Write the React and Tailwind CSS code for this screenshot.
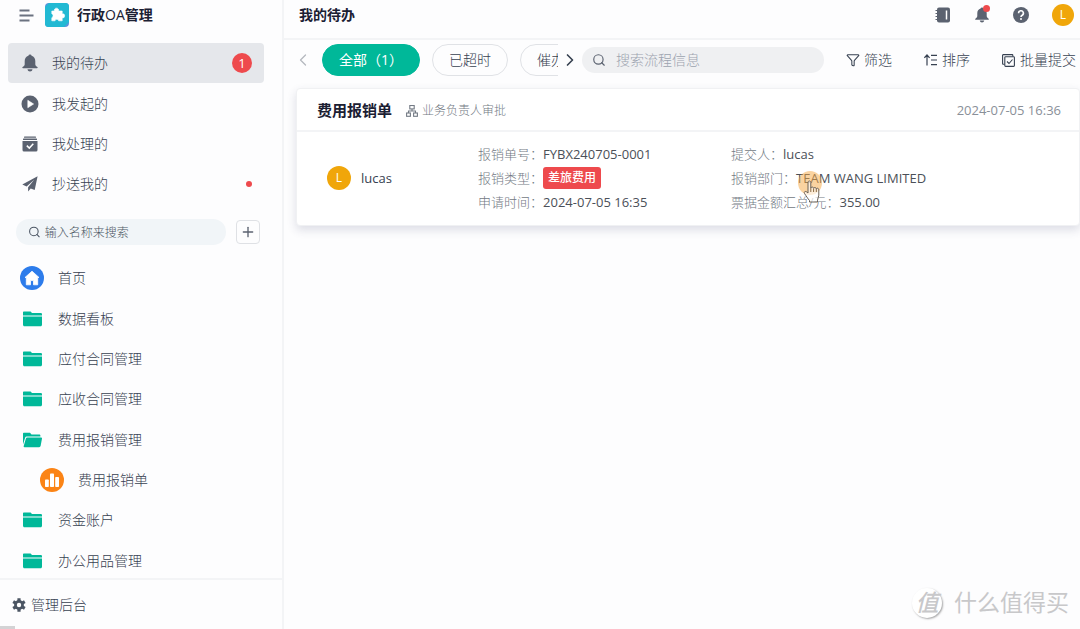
import { useState } from 'react';
import { ChevronLeft, ChevronRight, Search, Plus, Filter } from 'lucide-react';

const BellIcon = ({ className }) => (
    <svg viewBox="0 0 16 18" fill="currentColor" className={className}>
        <path d="M8 0.5a1.6 1.6 0 0 1 1.6 1.2C12 2.4 13.3 4.400 13.300 7v3.200c0 1.300 0.900 2 2.100 2.900 0.500 0.400 0.300 1.200-0.400 1.200H1c-0.700 0-0.900-0.800-0.400-1.200C1.800 12.200 2.700 11.500 2.700 10.200V7c0-2.600 1.300-4.600 3.700-5.300A1.600 1.600 0 0 1 8 0.500z" />
        <path d="M5.500 15.300h5c-0.200 1.400-1.200 2.200-2.500 2.200s-2.300-0.800-2.500-2.200z" />
    </svg>
);

const PlayIcon = () => (
    <svg viewBox="0 0 18 18" className="size-[18px]">
        <circle cx="9" cy="9" r="8.500" fill="currentColor" />
        <path d="M6.800 5.300v7.400L12.600 9z" fill="#fff" stroke="#fff" strokeWidth="0.600" strokeLinejoin="round" />
    </svg>
);

const DoneIcon = () => (
    <svg viewBox="0 0 16 16" className="size-4">
        <rect x="2" y="0.500" width="12" height="1.300" rx="0.500" fill="currentColor" />
        <rect x="1" y="2.600" width="14" height="1.300" rx="0.500" fill="currentColor" />
        <path d="M0.500 5h15v9a1.500 1.500 0 0 1-1.500 1.500H2A1.500 1.500 0 0 1 0.500 14z" fill="currentColor" />
        <path d="M4.800 9.600l2.500 2.500 4-4.300" fill="none" stroke="#fff" strokeWidth="1.500" />
    </svg>
);

const PlaneIcon = () => (
    <svg viewBox="0 0 16 16" fill="currentColor" className="size-4">
        <path d="M15.600 0.300L0.300 8.600l4.300 1.900 7.600-6.800-6.100 7.600v4.300l2.600-3.200 4 1.700z" />
    </svg>
);

const FolderIcon = () => (
    <svg viewBox="0 0 19 16" fill="#00b899" className="h-4 w-[19px]">
        <path d="M1 0.500h6.600L9 2h8.700c0.700 0 1.300 0.500 1.300 1.200V4.500H0v-3c0-0.600 0.400-1 1-1z" />
        <path d="M0 5.500h19v8.300c0 0.900-0.600 1.500-1.400 1.500H1.400C0.600 15.300 0 14.700 0 13.800z" />
    </svg>
);

const FolderOpenIcon = () => (
    <svg viewBox="0 0 19 16" fill="#00b899" className="h-4 w-[19px]">
        <path d="M1 0.800h6l1.500 1.600h7.700c0.700 0 1.200 0.500 1.200 1.200V4.400H3.600c-0.700 0-1.200 0.400-1.400 1L0 12.500V1.800c0-0.600 0.400-1 1-1z" />
        <path d="M4.200 5.500H18.200c0.600 0 0.900 0.500 0.800 1l-1.400 7.600c-0.200 0.700-0.700 1.100-1.400 1.100H1.500c-0.700 0-1-0.500-0.800-1.100l2.200-7.700c0.200-0.600 0.700-0.900 1.300-0.900z" />
    </svg>
);

const HomeIcon = () => (
    <svg viewBox="0 0 24 24" className="size-6">
        <circle cx="12" cy="12" r="12" fill="#2d7ceb" />
        <path d="M12 5.200l7 6.300h-1.300v7.300h-4.200v-4.200h-3v4.200H6.300v-7.300H5z" fill="#fff" stroke="#fff" strokeWidth="0.800" strokeLinejoin="round" />
    </svg>
);

const ChartIcon = () => (
    <svg viewBox="0 0 24 24" className="size-6">
        <circle cx="12" cy="12" r="12" fill="#fb8416" />
        <rect x="5" y="11.500" width="3.800" height="7.500" rx="0.800" fill="#fff" />
        <rect x="10" y="5.500" width="4" height="13.500" rx="0.800" fill="#fff" />
        <rect x="15.200" y="9" width="3.800" height="10" rx="0.800" fill="#fff" />
    </svg>
);

const GearIcon = () => (
    <svg viewBox="0 0 14 14" className="size-3.5">
        <g stroke="currentColor" strokeWidth="3.200">
            <path d="M7 0.300v13.400M1.200 3.650l11.600 6.700M1.200 10.350l11.600-6.700" />
        </g>
        <circle cx="7" cy="7" r="4.900" fill="currentColor" />
        <circle cx="7" cy="7" r="2.200" fill="#fff" />
    </svg>
);

const LogoIcon = () => (
    <svg viewBox="0 0 24 24" className="size-6">
        <rect width="24" height="24" rx="4" fill="#5a91dc" />
        <path d="M4 0h16.500A3.500 3.500 0 0 1 24 3.500V19l-5 5H3.500A3.500 3.500 0 0 1 0 20.500V4z" fill="#22b9d3" />
        <path d="M6.800 8h2.600a2.200 2.200 0 1 1 4.200 0h3.600v2.900a2 2 0 1 1 0 3.900v3h-3.500a1.900 1.900 0 0 0-3.700 0H6.800v-3.100a2.100 2.100 0 0 0 0-3.900z" fill="#fff" stroke="#fff" strokeWidth="0.600" strokeLinejoin="round" />
    </svg>
);

const MenuIcon = () => (
    <svg viewBox="0 0 15 13" className="h-[13px] w-[15px]" stroke="#6b7280" strokeWidth="1.900">
        <path d="M0.500 1.500h10M0.500 6.500h14M0.500 11.500h10" />
    </svg>
);

const NotebookIcon = () => (
    <svg viewBox="0 0 16 16" className="size-4">
        <rect x="2" y="0.500" width="13" height="15" rx="2" fill="currentColor" />
        <path d="M0.500 3.500h3M0.500 6.500h3M0.500 9.500h3M0.500 12.500h3" stroke="currentColor" strokeWidth="1.200" />
        <path d="M11.500 3.500v9" stroke="#fff" strokeWidth="1.500" />
    </svg>
);

const HelpIcon = () => (
    <svg viewBox="0 0 16 16" className="size-4">
        <circle cx="8" cy="8" r="8" fill="currentColor" />
        <path d="M5.600 6.200a2.400 2.400 0 1 1 3.600 2c-0.800 0.500-1.200 0.800-1.200 1.700" fill="none" stroke="#fff" strokeWidth="1.600" />
        <circle cx="8" cy="12" r="1" fill="#fff" />
    </svg>
);

const SortIcon = () => (
    <svg viewBox="0 0 13 12" className="h-3 w-[13px]" fill="none" stroke="currentColor" strokeWidth="1.200">
        <path d="M3 11.500V1M0.400 3.800L3 1l2.600 2.800M7 1.300h6M7 6h6M7 10.700h6" />
    </svg>
);

const BatchIcon = () => (
    <svg viewBox="0 0 13 13" className="size-[13px]" fill="none" stroke="currentColor" strokeWidth="1.100">
        <path d="M2.600 10.200H1.200a0.600 0.600 0 0 1-0.600-0.600V1.200a0.600 0.600 0 0 1 0.600-0.600h9a0.600 0.600 0 0 1 0.600 0.600v1.200" />
        <rect x="2.800" y="2.800" width="9.600" height="9.600" rx="0.800" />
        <path d="M5 7.500l2 2L10.500 5.500" />
    </svg>
);

const FlowIcon = () => (
    <svg viewBox="0 0 12 12" className="size-3" fill="none" stroke="currentColor" strokeWidth="1.100">
        <rect x="3.800" y="0.500" width="4.400" height="3.400" />
        <rect x="0.600" y="8" width="3.800" height="3.300" />
        <rect x="7.600" y="8" width="3.800" height="3.300" />
        <path d="M6 4v2M2.500 8V6h7v2" />
    </svg>
);

const HandCursor = () => (
    <svg viewBox="0 0 28 36" className="h-9 w-7">
        <circle cx="14" cy="14" r="12" fill="#f5a742" fillOpacity="0.500" />
        <path
            d="M12 24V13.500c0-2 2.800-2 2.800 0V19c0.400-1.400 2.700-1.300 2.800 0.300 0.500-1.200 2.600-1 2.700 0.500 0.600-1 2.500-0.700 2.500 1v5.400c0 2-1.300 3.200-1.300 5V33h-8v-1.500c-1.700-1.800-3.400-4.800-5-7-1-1.600 1-2.800 2.300-1.500z"
            fill="#fff"
            fillOpacity="0.600"
            stroke="#6b6258"
            strokeWidth="1"
            strokeLinejoin="round"
        />
        <path d="M14.800 19v4M17.600 19.500V23M20.300 20v3" stroke="#8a6a42" strokeWidth="1" />
    </svg>
);

const tasks = [
    { name: '我的待办', icon: <BellIcon className="h-[18px] w-4" />, count: 1 },
    { name: '我发起的', icon: <PlayIcon /> },
    { name: '我处理的', icon: <DoneIcon /> },
    { name: '抄送我的', icon: <PlaneIcon />, dot: true },
];

const menus = [
    { name: '首页', icon: <HomeIcon /> },
    { name: '数据看板', icon: <FolderIcon /> },
    { name: '应付合同管理', icon: <FolderIcon /> },
    { name: '应收合同管理', icon: <FolderIcon /> },
    { name: '费用报销管理', icon: <FolderOpenIcon /> },
    { name: '费用报销单', icon: <ChartIcon />, child: true },
    { name: '资金账户', icon: <FolderIcon /> },
    { name: '办公用品管理', icon: <FolderIcon /> },
];

const tabs = ['全部（1）', '已超时', '催办'];

const Field = ({ label, children }) => (
    <div className="flex h-6 items-center whitespace-nowrap">
        <dt className="text-[#737a84]">{label}：</dt>
        <dd className="font-normal text-[#4b5058]">{children}</dd>
    </div>
);

const Sidebar = ({ active, onSelect }) => (
    <aside className="flex w-[284px] shrink-0 flex-col border-r-2 border-[#f3f4f6]">
        <div className="flex h-[30px] items-center pl-[19px]">
            <button aria-label="收起菜单"><MenuIcon /></button>
            <span className="ml-[11px]"><LogoIcon /></span>
            <h1 className="ml-2 text-sm font-bold text-[#1b2033]">
                行政<span className="font-normal">OA</span>管理
            </h1>
        </div>

        <nav className="mt-[13px] pr-[18px] pl-2">
            {tasks.map((item) => (
                <a
                    key={item.name}
                    href="#"
                    onClick={() => onSelect(item.name)}
                    className={`flex h-10 items-center rounded pr-3 pl-3 first:mb-px ${active === item.name ? 'bg-[#e5e7eb]' : ''}`}
                >
                    <span className="flex w-5 justify-center text-[#5b6270]">{item.icon}</span>
                    <span className="ml-3 flex-1">{item.name}</span>
                    {item.count && (
                        <span className="flex size-5 items-center justify-center rounded-full bg-[#ee4a4d] text-[13px] font-normal text-white">
                            {item.count}
                        </span>
                    )}
                    {item.dot && <span className="size-1.5 rounded-full bg-[#ee4a4d]" />}
                </a>
            ))}
        </nav>

        <div className="mt-[15px] flex items-center gap-2.5 pr-[22px] pl-4">
            <label className="flex h-[26px] flex-1 items-center gap-1 rounded-full bg-[#f1f5f8] pl-3">
                <Search className="size-3.5 text-[#4b5563]" strokeWidth={2} />
                <input
                    aria-label="搜索菜单"
                    placeholder="输入名称来搜索"
                    className="w-full min-w-0 bg-transparent pt-0.5 text-xs outline-none placeholder:text-[#4b5563]"
                />
            </label>
            <button aria-label="新增" className="flex size-6 items-center justify-center rounded-sm border border-[#dfe1e5]">
                <Plus className="size-4 text-[#5b6270]" strokeWidth={2} />
            </button>
        </div>

        <nav className="mt-[13px] -mb-[3px] flex flex-1 flex-col">
            {menus.map((item) => (
                <a key={item.name} href="#" className={`flex min-h-10 flex-1 items-center ${item.child ? 'pl-10' : 'pl-5'}`}>
                    <span className="flex w-6 justify-center">{item.icon}</span>
                    <span className="ml-3.5">{item.name}</span>
                </a>
            ))}
        </nav>

        <div className="relative flex h-[51px] items-center border-t-2 border-[#f3f4f6] pl-3">
            <a href="#" className="flex items-center gap-[5px]">
                <span className="text-[#4b5563]"><GearIcon /></span>
                管理后台
            </a>
            <span className="absolute bottom-0 left-0 h-[3px] w-[15px] bg-[#d3d3d5]" />
        </div>
    </aside>
);

const App = () => {
    const [active, setActive] = useState('我的待办');
    const [tab, setTab] = useState(tabs[0]);

    return (
        <div className="flex min-h-screen overflow-hidden bg-[#fdfdfe] font-['Open_Sans','Noto_Sans_CJK_SC',sans-serif] text-sm font-light text-[#374151]">
            <Sidebar active={active} onSelect={setActive} />

            <main className="relative flex min-w-0 flex-1 flex-col">
                <header className="flex h-10 items-center border-b-2 border-[#f3f4f6] pr-1.5 pb-2 pl-[15px] text-[#5b6270]">
                    <h2 className="flex-1 text-sm font-bold text-[#1b2033]">{active}</h2>
                    <div className="flex items-center gap-[23px]">
                        <button aria-label="通讯录"><NotebookIcon /></button>
                        <button aria-label="通知" className="relative">
                            <BellIcon className="size-4" />
                            <span className="absolute -top-0.5 right-0 size-[7px] rounded-full bg-[#ee4a4d]" />
                        </button>
                        <button aria-label="帮助"><HelpIcon /></button>
                        <button className="flex size-[22px] items-center justify-center rounded-full bg-[#f0a60a] text-xs font-normal text-white">L</button>
                    </div>
                </header>

                <div className="flex h-10 items-center whitespace-nowrap">
                    <button aria-label="上一页" className="mr-[7px] ml-[9px]">
                        <ChevronLeft className="size-5 text-[#b4b8bf]" strokeWidth={1.5} />
                    </button>
                    <div className="flex w-[238px] gap-3 overflow-hidden pl-0.5">
                        {tabs.map((name) => (
                            <button
                                key={name}
                                onClick={() => setTab(name)}
                                className={`h-8 shrink-0 rounded-full border px-4 ${tab === name ? 'border-[#00b899] bg-[#00b899] font-normal text-white' : 'border-[#e0e2e6]'}`}
                            >
                                {name}
                            </button>
                        ))}
                    </div>
                    <button aria-label="下一页" className="mx-0.5">
                        <ChevronRight className="size-5 text-[#374151]" strokeWidth={2} />
                    </button>
                    <label className="flex h-[26px] min-w-0 flex-1 items-center gap-2.5 rounded-full bg-[#eff0f2] pl-2.5">
                        <Search className="size-3.5 shrink-0 text-[#5b6270]" strokeWidth={2} />
                        <input
                            aria-label="搜索流程"
                            placeholder="搜索流程信息"
                            className="w-full min-w-0 bg-transparent text-sm outline-none placeholder:text-[#9ca3af]"
                        />
                    </label>
                    <div className="ml-[22px] flex gap-8 pr-1">
                        <button className="flex items-center gap-1"><Filter className="size-3.5" strokeWidth={1.8} />筛选</button>
                        <button className="flex items-center gap-[5px]"><SortIcon />排序</button>
                        <button className="flex items-center gap-[5px]"><BatchIcon />批量提交</button>
                    </div>
                </div>

                <section className="mt-2 ml-3 rounded border border-[#f0f1f3] bg-white shadow-[0_4px_10px_rgba(50,55,100,0.16)]">
                    <div className="flex h-[43px] items-center border-b-2 border-[#f3f4f6] pt-0.5 pr-[18px] pl-5">
                        <h3 className="text-[15px] font-bold text-[#1b2033]">费用报销单</h3>
                        <span className="ml-3.5 flex flex-1 items-center gap-1 text-xs text-[#737a84]"><FlowIcon />业务负责人审批</span>
                        <time className="text-[13px] font-normal text-[#8a9099]">2024-07-05 16:36</time>
                    </div>
                    <div className="grid grid-cols-[181px_253px_1fr] pt-2.5 pb-[11px] text-[13px]">
                        <div className="flex items-center gap-2.5 pl-[30px] font-normal">
                            <span className="flex size-6 items-center justify-center rounded-full bg-[#f0a60a] text-xs text-white">L</span>
                            lucas
                        </div>
                        <dl>
                            <Field label="报销单号">FYBX240705-0001</Field>
                            <Field label="报销类型">
                                <span className="flex h-[22px] items-center rounded-[3px] bg-[#ee4a4d] px-[5px] text-xs font-medium text-white">差旅费用</span>
                            </Field>
                            <Field label="申请时间">2024-07-05 16:35</Field>
                        </dl>
                        <dl>
                            <Field label="提交人">lucas</Field>
                            <Field label="报销部门">TEAM WANG LIMITED</Field>
                            <Field label="票据金额汇总/元">355.00</Field>
                        </dl>
                    </div>
                </section>

                <div className="pointer-events-none absolute top-[169px] left-[512px]"><HandCursor /></div>

                <div className="pointer-events-none absolute right-[11px] bottom-2.5 flex items-center gap-3 text-[#c8c8ca]">
                    <span className="flex size-[30px] items-center justify-center rounded-full bg-white text-[23px] font-medium italic shadow-[1px_1px_2px_rgba(0,0,0,0.35)]">值</span>
                    <span className="text-[23px] font-normal">什么值得买</span>
                </div>
            </main>
        </div>
    );
};

export default App;
